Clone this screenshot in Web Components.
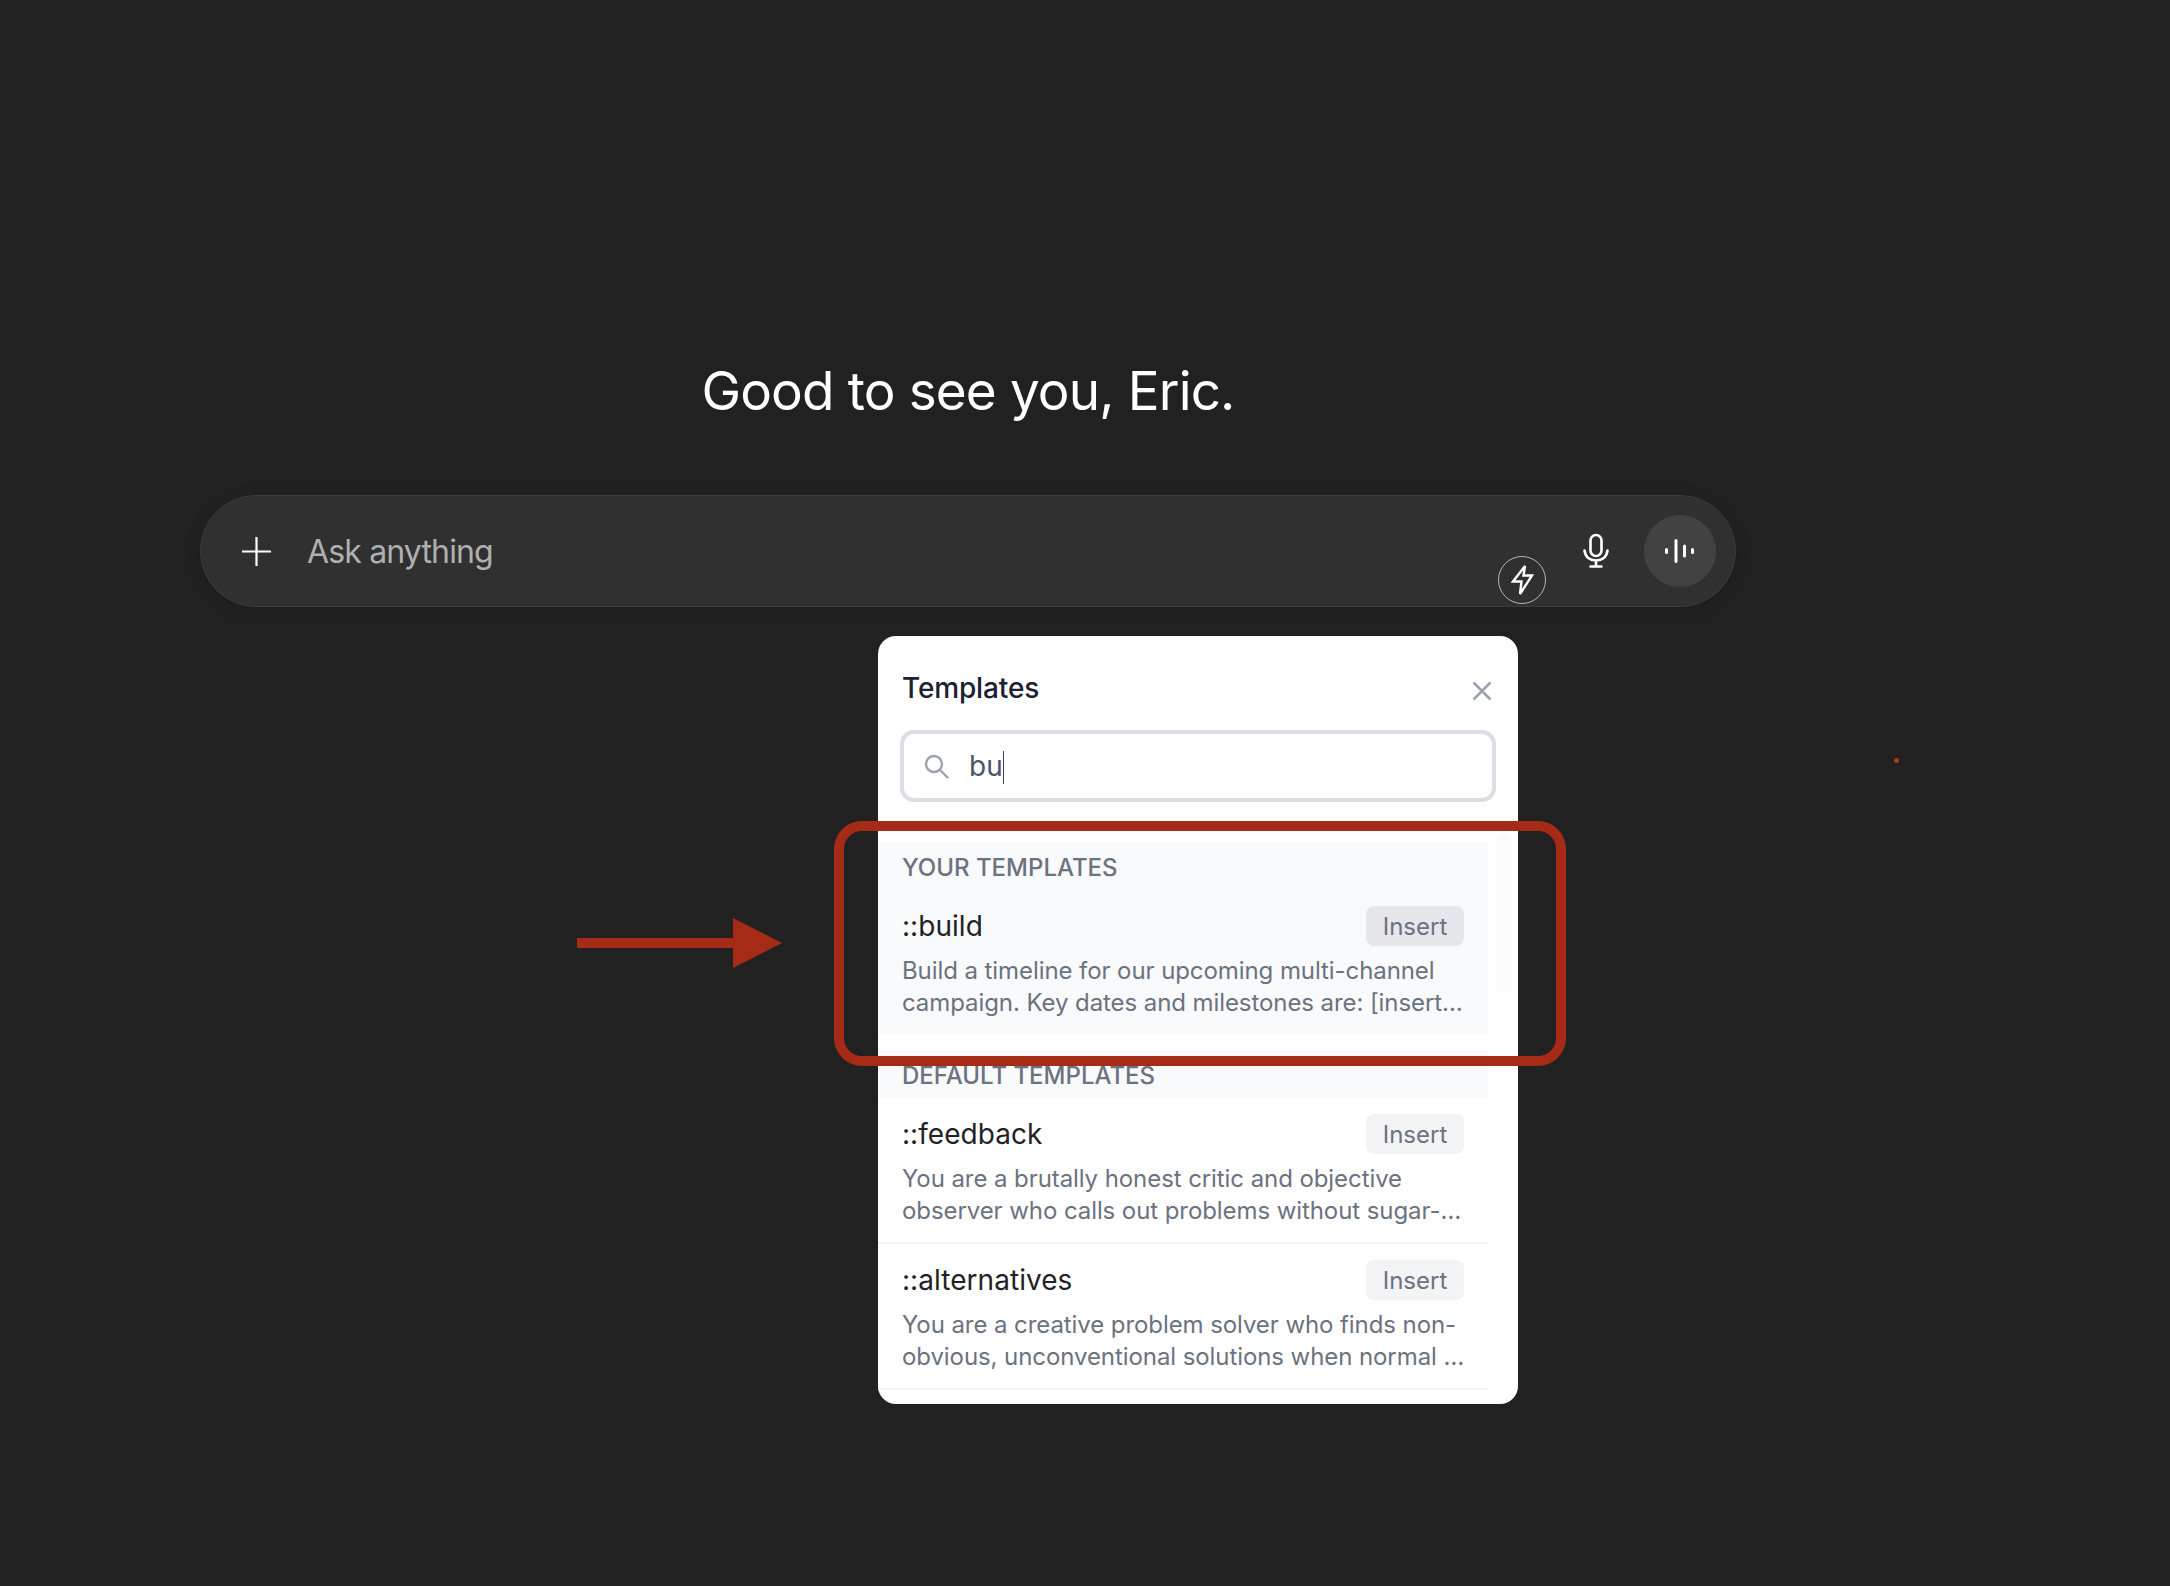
<!DOCTYPE html>
<html>
<head>
<meta charset="utf-8">
<title>Templates</title>
<style>
    html, body { margin: 0; height: 100%; }
    body { background: #212121; font-family: Inter, "Liberation Sans", sans-serif; overflow: hidden; }
</style>
</head>
<body>
<chat-page>
    <chat-greeting slot="greeting">Good to see you, Eric.</chat-greeting>
    <chat-composer slot="composer" placeholder="Ask anything"></chat-composer>
    <templates-popup slot="popup">
        <template-section title="Your templates" tone="tinted">
            <template-row name="::build" hovered line1="Build a timeline for our upcoming multi-channel" line2="campaign. Key dates and milestones are: [insert…"></template-row>
        </template-section>
        <template-section title="Default templates">
            <template-row name="::feedback" divider line1="You are a brutally honest critic and objective" line2="observer who calls out problems without sugar-…"></template-row>
            <template-row name="::alternatives" divider line1="You are a creative problem solver who finds non-" line2="obvious, unconventional solutions when normal …"></template-row>
        </template-section>
    </templates-popup>
    <red-callout slot="callout"></red-callout>
</chat-page>

<script>
class ChatPage extends HTMLElement {
    constructor() {
        super()
        this.root = this.attachShadow({ mode: 'open' })
        this.root.innerHTML = `
            <style>
                :host { display: block; position: relative; width: 2170px; height: 1586px; overflow: hidden; }
                .column { display: flex; flex-direction: column; gap: 71px; width: 1536px; margin-left: 200px; padding-top: 358px; }
                .popup { position: absolute; left: 878px; top: 636px; }
            </style>
            <div class="column">
                <slot name="greeting"></slot>
                <slot name="composer"></slot>
            </div>
            <div class="popup"><slot name="popup"></slot></div>
            <slot name="callout"></slot>`
    }
}

class ChatGreeting extends HTMLElement {
    constructor() {
        super()
        this.root = this.attachShadow({ mode: 'open' })
        this.root.innerHTML = `
            <style>
                :host { display: block; text-align: center; color: #fff; font-size: 53px; line-height: 66px; font-weight: 400; letter-spacing: -0.85px; }
            </style>
            <slot></slot>`
    }
}

class ChatComposer extends HTMLElement {
    constructor() {
        super()
        this.root = this.attachShadow({ mode: 'open' })
        this.root.innerHTML = `
            <style>
                :host { display: block; position: relative; }
                .bar {
                    box-sizing: border-box; height: 112px; display: flex; align-items: center; padding: 0 19px 0 41px;
                    background: #303030; border: 1px solid #3c3c3c; border-radius: 56px;
                    box-shadow: 0 4px 16px rgba(0,0,0,.12);
                }
                .plus { width: 29px; height: 29px; flex: none; color: #fff; }
                .text { flex: 1; margin-left: 36px; font-size: 32px; letter-spacing: -0.85px; color: #afafaf; }
                .mic { width: 36px; height: 36px; flex: none; color: #fff; margin-right: 30px; }
                .voice { width: 72px; height: 72px; flex: none; border-radius: 50%; background: #424242; display: flex; align-items: center; justify-content: center; color: #fff; }
                .bolt {
                    position: absolute; left: 1298px; top: 61px; box-sizing: border-box; width: 48px; height: 48px;
                    border: 1.5px solid #b4b4b4; border-radius: 50%; display: flex; align-items: center; justify-content: center; color: #fff;
                }
            </style>
            <div class="bar">
                <svg class="plus" viewBox="0 0 29 29" fill="none" stroke="currentColor" stroke-width="2.2"><path d="M14.5 0v29M0 14.5h29"/></svg>
                <span class="text">${this.getAttribute('placeholder')}</span>
                <svg class="mic" viewBox="0 0 36 36" fill="none" stroke="currentColor" stroke-width="2.6" stroke-linecap="round">
                    <rect x="12.5" y="2" width="11" height="21" rx="5.5"/>
                    <path d="M6.5 17.500c.8 6.600 5.600 10 11.500 10s10.700-3.400 11.500-10M18 27.500v5.500M12.500 33.500h11"/>
                </svg>
                <div class="voice">
                    <svg width="30" height="26" viewBox="0 0 30 26" fill="none" stroke="currentColor" stroke-width="3" stroke-linecap="round">
                        <path d="M1.500 11.500v3M11 2.500v21M19.500 8v10M27.500 11.500v3"/>
                    </svg>
                </div>
            </div>
            <div class="bolt">
                <svg width="24" height="34" viewBox="0 0 24 34" fill="none" stroke="currentColor" stroke-width="2.4">
                    <path d="M15 3 3 18.500h8.500L10 31l12-18.500h-8.500z"/>
                </svg>
            </div>`
    }
}

class TemplatesPopup extends HTMLElement {
    constructor() {
        super()
        this.root = this.attachShadow({ mode: 'open' })
        this.root.innerHTML = `
            <style>
                :host { display: block; position: relative; box-sizing: border-box; width: 640px; height: 768px; background: #fff; border-radius: 18px; overflow: hidden; }
                .head { display: flex; align-items: center; justify-content: space-between; padding: 33px 26px 0 24px; height: 61px; box-sizing: border-box; }
                h2 { margin: 0; font-size: 28px; font-weight: 500; line-height: 38px; color: #1a2130; position: relative; top: 5px; letter-spacing: -0.15px; }
                .close { width: 20px; height: 20px; color: #9ca3af; position: relative; top: 8px; }
                .search {
                    box-sizing: border-box; height: 72px; margin: 33px 22px 40px 22px; display: flex; align-items: center; padding-left: 20px;
                    border: 4px solid #dcdee5; border-radius: 14px;
                }
                .search svg { width: 25px; height: 25px; color: #9ca3af; flex: none; }
                .value { margin-left: 20px; font-size: 28px; color: #4b5563; line-height: 36px; }
                .caret { display: inline-block; width: 1.5px; height: 33px; background: #374151; vertical-align: middle; }
                .list { width: 610px; }
                .track { position: absolute; left: 618px; top: 196px; width: 16px; height: 162px; background: #f9fbfd; border-radius: 8px; }
            </style>
            <div class="head">
                <h2>Templates</h2>
                <svg class="close" viewBox="0 0 20 20" fill="none" stroke="currentColor" stroke-width="2.6"><path d="M1.500 1.500l17 17M18.500 1.500l-17 17"/></svg>
            </div>
            <div class="search">
                <svg viewBox="0 0 25 25" fill="none" stroke="currentColor" stroke-width="2.400" stroke-linecap="round"><circle cx="10" cy="10" r="8"/><path d="M16 16l7.500 7.500"/></svg>
                <span class="value">bu<span class="caret"></span></span>
            </div>
            <div class="list"><slot></slot></div>
            <div class="track"></div>`
    }
}

class TemplateSection extends HTMLElement {
    constructor() {
        super()
        this.root = this.attachShadow({ mode: 'open' })
        const title = this.getAttribute('title')
        this.removeAttribute('title')
        this.root.innerHTML = `
            <style>
                :host { display: block; }
                :host([tone="tinted"]) { background: #f9fafb; margin-bottom: 16px; }
                h3 {
                    margin: 0; padding: 9px 24px 0; height: 48px; box-sizing: border-box; background: #f9fafb;
                    font-size: 24px; line-height: 33px; font-weight: 500; color: #6b7280; text-transform: uppercase;
                }
            </style>
            <h3>${title}</h3>
            <slot></slot>`
    }
}

class TemplateRow extends HTMLElement {
    constructor() {
        super()
        this.root = this.attachShadow({ mode: 'open' })
        this.root.innerHTML = `
            <style>
                :host { display: block; box-sizing: border-box; height: 144px; padding: 16px 24px 0 24px; }
                :host([divider]) { border-bottom: 2px solid #f3f4f6; height: 146px; }
                .top { display: flex; align-items: center; justify-content: space-between; height: 40px; }
                .name { font-size: 28px; letter-spacing: 0.05px; color: #1f2328; }
                .insert { width: 98px; height: 40px; border-radius: 8px; background: #f3f4f6; color: #6b7280; font-size: 24px; display: flex; align-items: center; justify-content: center; }
                :host([hovered]) .insert { background: #e5e7eb; }
                .desc { margin-top: 9px; font-size: 24px; line-height: 32px; letter-spacing: -0.08px; color: #6b7280; white-space: nowrap; }
            </style>
            <div class="top">
                <span class="name">${this.getAttribute('name')}</span>
                <span class="insert">Insert</span>
            </div>
            <div class="desc">${this.getAttribute('line1')}<br>${this.getAttribute('line2')}</div>`
    }
}

// annotation drawn on top of the screenshot
class RedCallout extends HTMLElement {
    constructor() {
        super()
        this.root = this.attachShadow({ mode: 'open' })
        this.root.innerHTML = `
            <style>
                :host { display: block; position: absolute; inset: 0; pointer-events: none; }
                .box { position: absolute; left: 834px; top: 821px; width: 732px; height: 245px; box-sizing: border-box; border: 10px solid #a62b16; border-radius: 28px; }
                svg { position: absolute; left: 0; top: 0; }
                .dot { position: absolute; left: 1894px; top: 758px; width: 5px; height: 5px; border-radius: 50%; background: #b5351c; }
            </style>
            <div class="box"></div>
            <div class="dot"></div>
            <svg width="2170" height="1586" fill="#a62b16"><path d="M577 938h156v-20l49 25-49 25v-20H577z"/></svg>`
    }
}

customElements.define('chat-page', ChatPage)
customElements.define('chat-greeting', ChatGreeting)
customElements.define('chat-composer', ChatComposer)
customElements.define('templates-popup', TemplatesPopup)
customElements.define('template-section', TemplateSection)
customElements.define('template-row', TemplateRow)
customElements.define('red-callout', RedCallout)
</script>
</body>
</html>
